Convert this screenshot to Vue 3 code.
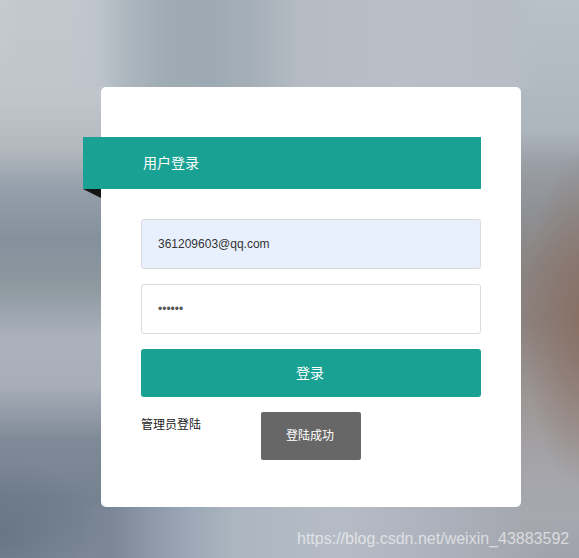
<script setup>
const email = '361209603@qq.com'
const password = '123456'
</script>

<template>
  <main class="page">
    <section class="card">
      <h1 class="ribbon">用户登录</h1>
      <form class="form" @submit.prevent>
        <input class="field filled" type="text" :value="email" />
        <input class="field" type="password" :value="password" />
        <button class="submit" type="submit">登录</button>
      </form>
      <div class="extras">
        <a class="admin">管理员登陆</a>
        <div class="toast">登陆成功</div>
      </div>
    </section>
    <span class="watermark">https://blog.csdn.net/weixin_43883592</span>
  </main>
</template>

<style scoped>
.page {
  position: relative;
  box-sizing: border-box;
  width: 579px;
  height: 558px;
  padding: 87px 0 0 101px;
  overflow: hidden;
  font-family: "Liberation Sans", "Noto Sans CJK SC", sans-serif;
  background-color: #a9b0ba;
  background-repeat: no-repeat;
  background-image:
    linear-gradient(to right, rgba(188, 196, 202, 0) 70px, #bcc4ca 100px, #abb5bd 130px, #9eabb3 170px, #9daab3 210px, #a5afb7 250px, #b4bbc3 300px, #b8bfc7 400px, #b6bdc5 515px, rgba(182, 189, 197, 0) 540px),
    linear-gradient(to right, rgba(120, 133, 147, 0) 80px, #7a8696 110px, #8d99a9 150px, #9ca8b7 190px, #acb6c0 235px, #b6bcc6 340px, #abb0ba 450px, #a6a8b0 515px, rgba(166, 168, 176, 0) 550px),
    radial-gradient(ellipse 60px 170px at 584px 320px, rgba(136, 108, 96, 0.85), rgba(136, 108, 96, 0) 100%),
    radial-gradient(ellipse 110px 75px at 0 535px, rgba(95, 108, 122, 0.65), rgba(95, 108, 122, 0) 100%),
    radial-gradient(ellipse 22px 60px at 0 15px, rgba(197, 204, 204, 0.7), rgba(197, 204, 204, 0) 100%),
    linear-gradient(to bottom, #c3c8cf 0, #c0c5cc 100px, #b2b8be 150px, #939eaa 190px, #84909c 240px, #8d989f 285px, #acb2bc 340px, #a8aeb8 385px, #7f8a98 440px, #75828f 500px, #7f8b9b 558px),
    linear-gradient(to bottom, #b8c0c8 0, #adb5bd 130px, #999ea5 165px, #8f9195 210px, #8a8380 270px, #8b807c 320px, #9d9796 400px, #a5a5aa 470px, #a6a8b0 520px, #a0a2ab 558px);
  background-position: 0 0, 0 507px, 0 0, 0 0, 0 0, 0 0, right 0 top 0;
  background-size: 100% 87px, 100% 51px, 100% 100%, 100% 100%, 100% 100%, 110px 100%, 70px 100%;
}

.card {
  box-sizing: border-box;
  width: 420px;
  height: 420px;
  padding: 50px 40px 0;
  background: #fff;
  border-radius: 5px;
}

.ribbon {
  position: relative;
  box-sizing: border-box;
  height: 52px;
  margin: 0 0 30px -58px;
  padding-left: 60px;
  background: #19a193;
  color: #fff;
  font-size: 14px;
  font-weight: 400;
  line-height: 52px;
}

.ribbon::after {
  content: "";
  position: absolute;
  left: 0;
  top: 100%;
  border-top: 9px solid #151515;
  border-left: 18px solid transparent;
}

.form {
  display: flex;
  flex-direction: column;
  gap: 15px;
}

.field {
  box-sizing: border-box;
  width: 340px;
  height: 50px;
  padding: 0 16px;
  border: 1px solid #dcdcdc;
  border-radius: 3px;
  background: #fff;
  color: #555;
  font-family: inherit;
  font-size: 12px;
  outline: none;
}

.filled {
  background: #e8f0fe;
  color: #333;
}

.submit {
  height: 48px;
  border: 0;
  border-radius: 3px;
  padding: 0 2px 2px 0;
  background: #19a193;
  color: #fff;
  font-family: inherit;
  font-size: 14px;
}

.extras {
  display: flex;
  align-items: flex-start;
  gap: 60px;
  margin-top: 15px;
}

.admin {
  margin-top: 6px;
  color: #222;
  font-size: 12px;
  line-height: 14px;
}

.toast {
  box-sizing: border-box;
  width: 100px;
  height: 48px;
  padding-right: 2px;
  border-radius: 2px;
  background: #676767;
  color: #fff;
  font-size: 12px;
  line-height: 48px;
  text-align: center;
}

.watermark {
  position: absolute;
  left: 297px;
  top: 529px;
  color: rgba(255, 255, 255, 0.6);
  font-size: 16px;
  line-height: 20px;
}
</style>
